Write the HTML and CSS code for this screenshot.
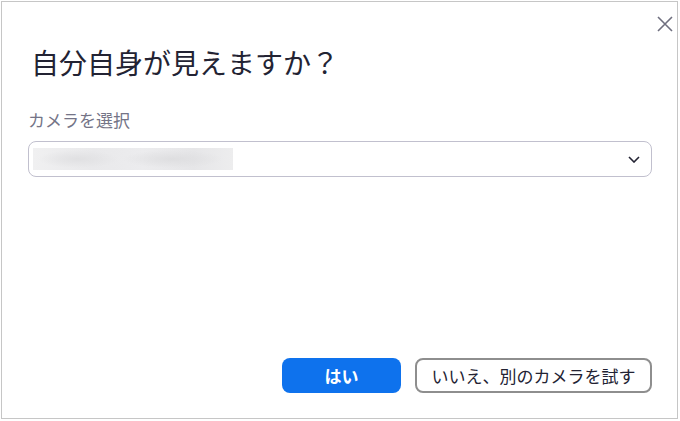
FILE: index.html
```html
<!DOCTYPE html>
<html lang="ja">
<head>
<meta charset="utf-8">
<link rel="stylesheet" href="styles.css">
</head>
<body>
<div class="dialog">
  <button class="close" aria-label="閉じる">
    <svg width="16" height="16" viewBox="0 0 16 16"><path d="M1 1 L15 15 M15 1 L1 15" stroke="#6f6f7f" stroke-width="1.6" fill="none"/></svg>
  </button>
  <h1 class="title">自分自身が見えますか？</h1>
  <div class="label">カメラを選択</div>
  <div class="select">
    <div class="blurred"></div>
    <svg class="chev" width="12" height="7" viewBox="0 0 12 7"><path d="M1 1 L6 6 L11 1" stroke="#232333" stroke-width="1.6" fill="none"/></svg>
  </div>
  <div class="spacer"></div>
  <div class="actions">
    <button class="btn primary">はい</button>
    <button class="btn secondary">いいえ、別のカメラを試す</button>
  </div>
</div>
</body>
</html>
```
FILE: styles.css
```css
html, body {
  margin: 0;
  padding: 0;
  background: #ffffff;
}
body {
  width: 680px;
  height: 421px;
  overflow: hidden;
  font-family: "Noto Sans CJK JP", "Noto Sans", sans-serif;
}
.dialog {
  position: relative;
  box-sizing: border-box;
  margin: 1px 0 0 1px;
  width: 677px;
  height: 418px;
  border: 1px solid #c6c6c6;
  background: #fff;
  padding: 0 25px 25px 26px;
  display: flex;
  flex-direction: column;
}
.close {
  position: absolute;
  top: 13px;
  right: 3px;
  width: 18px;
  height: 18px;
  padding: 1px;
  border: 0;
  background: transparent;
  display: flex;
  align-items: center;
  justify-content: center;
}
.title {
  margin: 40px 0 0 3px;
  font-size: 28px;
  line-height: 40px;
  font-weight: 400;
  color: #232333;
}
.label {
  margin-top: 26px;
  font-size: 17px;
  line-height: 24px;
  color: #747487;
}
.select {
  margin-top: 9px;
  box-sizing: border-box;
  height: 36px;
  border: 1px solid #c1c0ce;
  border-radius: 8px;
  display: flex;
  align-items: center;
  justify-content: space-between;
  padding: 0 11px 0 4px;
}
.blurred {
  width: 200px;
  height: 22px;
  background:
    radial-gradient(ellipse 40px 9px at 45px 11px, #e0e0e2, rgba(228,228,230,0)),
    radial-gradient(ellipse 50px 9px at 140px 11px, #dedee0, rgba(228,228,230,0)),
    linear-gradient(90deg, #f0f0f1, #e9e9eb 30%, #ececee 55%, #e6e6e8 80%, #ededee);
}
.chev {
  display: block;
}
.spacer {
  flex: 1;
}
.actions {
  display: flex;
  justify-content: flex-end;
  gap: 14px;
}
.btn {
  box-sizing: border-box;
  height: 35px;
  border-radius: 8px;
  font-family: "Noto Sans CJK JP", "Noto Sans", sans-serif;
  font-size: 17px;
  line-height: 1;
  padding: 0;
  display: flex;
  align-items: center;
  justify-content: center;
}
.primary {
  width: 119px;
  background: #0e72ed;
  border: 0;
  color: #fff;
  font-weight: 700;
}
.secondary {
  width: 237px;
  background: #fff;
  border: 2px solid #8e8e8e;
  color: #232333;
  font-weight: 400;
}
```
